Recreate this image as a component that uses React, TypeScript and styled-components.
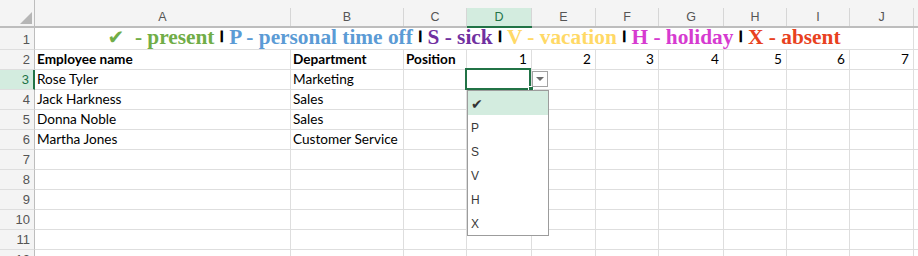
import React from "react";
import styled, { createGlobalStyle, css } from "styled-components";

const GlobalStyle = createGlobalStyle`
  html, body { margin: 0; padding: 0; background: #fff; overflow: hidden; }
  body { font-family: "Liberation Sans", Arial, sans-serif; }
  * { box-sizing: border-box; }
`;

const COLS = [256, 113, 63, 65, 64, 63, 65, 63, 63, 64];
const LETTERS = ["A", "B", "C", "D", "E", "F", "G", "H", "I", "J"];
const GREEN = "#217346";
const GREEN_BG = "#d3ecdf";
const GRID = "#dedede";
const HEAD_LINE = "#bdbdbd";
const HEAD_BG = "#f4f4f4";
const SERIF = `"Liberation Serif", "Times New Roman", "DejaVu Serif", serif`;

const Sheet = styled.div`
  display: grid;
  grid-template-columns: 35px ${COLS.map((c) => `${c}px`).join(" ")} 1fr;
  grid-template-rows: 28px 22px repeat(11, 20px);
  width: 918px;
  height: 256px;
  overflow: hidden;
`;

const Corner = styled.div`
  position: relative;
  background: ${HEAD_BG};
  border-right: 1px solid ${HEAD_LINE};
  border-bottom: 2px solid ${HEAD_LINE};
  &::after {
    content: "";
    position: absolute;
    right: 2px;
    bottom: 2px;
    width: 0;
    height: 0;
    border-left: 12px solid transparent;
    border-bottom: 12px solid #b6b6b6;
  }
`;

const ColHead = styled.div<{ $active?: boolean }>`
  display: flex;
  padding-top: 8px;
  background: ${HEAD_BG};
  border-bottom: 2px solid ${(p) => (p.$active ? GREEN : HEAD_LINE)};
`;

const ColLabel = styled.div<{ $active?: boolean; $last?: boolean }>`
  flex: 1;
  display: flex;
  align-items: center;
  justify-content: center;
  padding-bottom: 1px;
  font-size: 12.5px;
  color: ${(p) => (p.$active ? GREEN : "#555")};
  background: ${(p) => (p.$active ? GREEN_BG : "transparent")};
  border-right: ${(p) => (p.$last ? "none" : "1px solid #d6d6d6")};
`;

const RowHead = styled.div<{ $active?: boolean }>`
  display: flex;
  align-items: flex-end;
  justify-content: flex-end;
  padding: 0 4px 2px 0;
  font-size: 13px;
  line-height: 15px;
  color: ${(p) => (p.$active ? GREEN : "#555")};
  background: ${(p) => (p.$active ? GREEN_BG : HEAD_BG)};
  border-right: ${(p) => (p.$active ? `2px solid ${GREEN}` : `1px solid ${HEAD_LINE}`)};
  border-bottom: 1px solid ${GRID};
`;

const Cell = styled.div<{ $right?: boolean; $bold?: boolean }>`
  position: relative;
  display: flex;
  align-items: flex-end;
  justify-content: ${(p) => (p.$right ? "flex-end" : "flex-start")};
  padding: 0 ${(p) => (p.$right ? "4px" : "3px")} 1px 2px;
  font-family: "Lato", "Liberation Sans", sans-serif;
  font-size: 13.6px;
  line-height: 17px;
  font-weight: ${(p) => (p.$bold ? 700 : 400)};
  color: #000;
  white-space: nowrap;
  border-right: 1px solid ${GRID};
  border-bottom: 1px solid ${GRID};
`;

const TitleCell = styled.div`
  grid-column: 2 / span 10;
  display: flex;
  align-items: flex-end;
  justify-content: center;
  padding-bottom: 1px;
  font-family: ${SERIF};
  font-weight: 700;
  font-size: 21.33px;
  line-height: 21px;
  white-space: pre;
  border-right: 1px solid ${GRID};
  border-bottom: 1px solid ${GRID};
`;

const Legend = styled.span<{ $color: string }>`
  font-family: ${SERIF};
  font-weight: 700;
  color: ${(p) => p.$color};
`;

const Check = styled.span`
  font-family: "DejaVu Sans", sans-serif;
  font-size: 20px;
`;

const Sep = styled.span`
  font-family: "DejaVu Sans", "Liberation Sans", sans-serif;
  font-weight: 700;
  font-size: 11px;
  color: #000;
  -webkit-text-stroke: 1.1px #000;
  position: relative;
  top: -2px;
`;

const Selection = styled.div`
  position: absolute;
  left: -2px;
  top: -2px;
  right: 0;
  bottom: -1px;
  border: 2px solid ${GREEN};
  pointer-events: none;
  z-index: 3;
`;

const FillHandle = styled.div`
  position: absolute;
  right: -3px;
  bottom: -3px;
  width: 6px;
  height: 6px;
  background: ${GREEN};
  border: 1px solid #fff;
  z-index: 4;
`;

const DropButton = styled.div`
  position: absolute;
  left: 65px;
  top: 1px;
  width: 16px;
  height: 16px;
  background: #fff;
  border: 1px solid #a3a3a3;
  display: flex;
  align-items: center;
  justify-content: center;
  z-index: 4;
  &::before {
    content: "";
    width: 0;
    height: 0;
    border-left: 4px solid transparent;
    border-right: 4px solid transparent;
    border-top: 4px solid #6d6d6d;
  }
`;

const DropList = styled.ul`
  position: absolute;
  left: 0;
  top: 20px;
  width: 82px;
  height: 146px;
  margin: 0;
  padding: 0;
  list-style: none;
  background: #fff;
  border: 1px solid #9c9c9c;
  z-index: 5;
`;

const DropItem = styled.li<{ $hi?: boolean }>`
  height: 24px;
  display: flex;
  align-items: center;
  padding: 2px 0 0 3px;
  font-family: "Liberation Sans", Arial, sans-serif;
  font-size: 12px;
  color: #3a3a3a;
  background: ${(p) => (p.$hi ? GREEN_BG : "transparent")};
  ${(p) =>
    p.$hi &&
    css`
      font-family: "DejaVu Sans", sans-serif;
      font-size: 14px;
      color: #333;
    `}
`;

const people = [
  ["Rose Tyler", "Marketing"],
  ["Jack Harkness", "Sales"],
  ["Donna Noble", "Sales"],
  ["Martha Jones", "Customer Service"],
];

const options = ["✔", "P", "S", "V", "H", "X"];

function SelectedCell() {
  return (
    <Cell>
      <Selection />
      <FillHandle />
      <DropButton />
      <DropList>
        {options.map((o, i) => (
          <DropItem key={o} $hi={i === 0}>
            {o}
          </DropItem>
        ))}
      </DropList>
    </Cell>
  );
}

export default function App() {
  const bodyRows: React.ReactNode[] = [];

  bodyRows.push(
    <React.Fragment key="r2">
      <RowHead>2</RowHead>
      <Cell $bold>Employee name</Cell>
      <Cell $bold>Department</Cell>
      <Cell $bold>Position</Cell>
      {[1, 2, 3, 4, 5, 6, 7].map((n) => (
        <Cell key={n} $right>
          {n}
        </Cell>
      ))}
      <Cell />
    </React.Fragment>
  );

  for (let r = 3; r <= 12; r++) {
    const person = people[r - 3];
    bodyRows.push(
      <React.Fragment key={`r${r}`}>
        <RowHead $active={r === 3}>{r}</RowHead>
        <Cell>{person ? person[0] : ""}</Cell>
        <Cell>{person ? person[1] : ""}</Cell>
        <Cell />
        {r === 3 ? <SelectedCell /> : <Cell />}
        {[0, 1, 2, 3, 4, 5].map((c) => (
          <Cell key={c} />
        ))}
        <Cell />
      </React.Fragment>
    );
  }

  return (
    <>
      <GlobalStyle />
      <Sheet>
        <Corner />
        {LETTERS.map((l) => (
          <ColHead key={l} $active={l === "D"}>
            <ColLabel $active={l === "D"}>{l}</ColLabel>
          </ColHead>
        ))}
        <ColHead>
          <ColLabel $last />
        </ColHead>

        <RowHead>1</RowHead>
        <TitleCell>
          <Legend $color="#70ad47">
            <Check>✔</Check>
            {"  - present "}
          </Legend>
          <Sep>|</Sep>
          <Legend $color="#5b9bd5">{" P - personal time off "}</Legend>
          <Sep>|</Sep>
          <Legend $color="#7030a0">{" S - sick "}</Legend>
          <Sep>|</Sep>
          <Legend $color="#ffd966">{" V - vacation "}</Legend>
          <Sep>|</Sep>
          <Legend $color="#d63bd0">{" H - holiday "}</Legend>
          <Sep>|</Sep>
          <Legend $color="#e8411e">{" X - absent"}</Legend>
        </TitleCell>
        <Cell />

        {bodyRows}
      </Sheet>
    </>
  );
}
